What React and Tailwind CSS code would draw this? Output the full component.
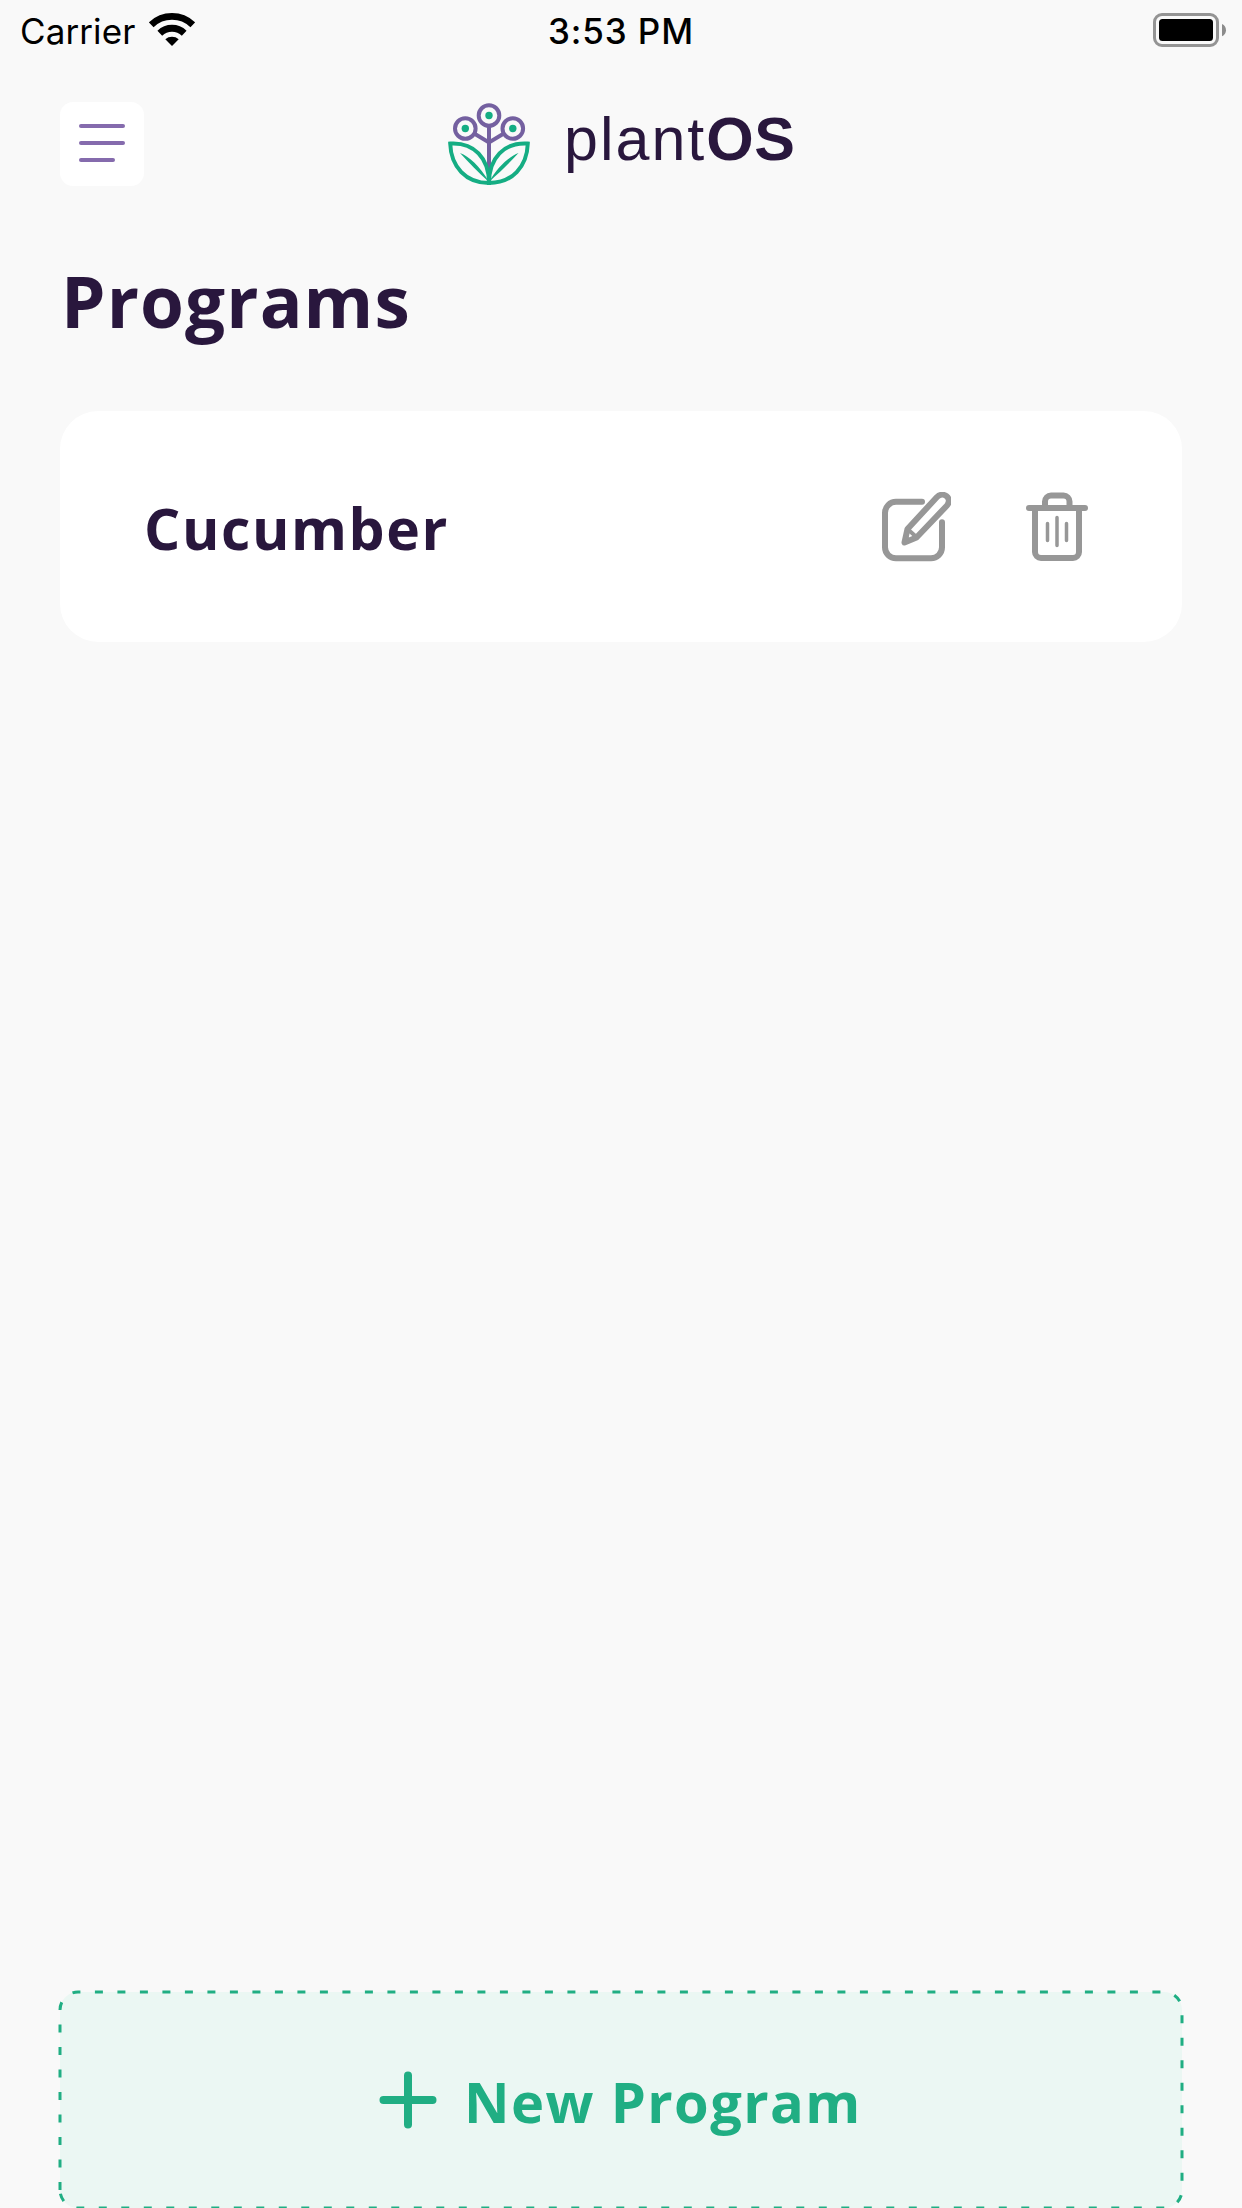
function Wifi() {
  return (
    <svg className="ml-[14px] h-[34px] w-[46px]" viewBox="149 13 46 34" fill="none">
      <path d="M151.200 24.800A30 30 0 0 1 192.800 24.800" stroke="#000" strokeWidth="6.800" />
      <path d="M159.800 33.200A17.500 17.500 0 0 1 184.200 33.200" stroke="#000" strokeWidth="6.800" />
      <path d="M165.300 39.200a10.500 10.500 0 0 1 13.400 0L172 46Z" fill="#000" />
    </svg>
  );
}

function Battery() {
  return (
    <svg className="h-[34px] w-[74px]" viewBox="1153 13 74 34" fill="none">
      <rect x="1154.500" y="14.500" width="63" height="31" rx="7.500" stroke="#949494" strokeWidth="3" />
      <rect x="1159" y="19" width="54" height="22" rx="3.500" fill="#000" />
      <path d="M1222 24c5.300 2.300 5.300 10 0 12.300Z" fill="#8c8c8c" />
    </svg>
  );
}

function StatusBar() {
  return (
    <div className="grid h-[60px] grid-cols-3 items-center pl-5 pr-[20px] font-['Inter'] text-[35px] leading-[58px] text-black">
      <div className="flex items-center">
        <span className="pt-[2px] tracking-[0.100px]">Carrier</span>
        <Wifi />
      </div>
      <div className="pt-[2px] text-center font-medium tracking-[0.900px]">3:53 PM</div>
      <div className="-mr-[5px] flex justify-end">
        <Battery />
      </div>
    </div>
  );
}

function PlantLogo() {
  return (
    <svg className="h-[84px] w-[84px]" viewBox="447 102 84 84" fill="none">
      <g stroke="#7460a0" strokeWidth="4">
        <path d="M489 127v42M475 134l14 8.500 14-8.500" />
        <circle cx="489" cy="115.500" r="10.300" />
        <circle cx="465.300" cy="128.500" r="10.300" />
        <circle cx="512.800" cy="128.500" r="10.300" />
      </g>
      <g fill="#15ad83">
        <circle cx="489" cy="115.500" r="3.700" />
        <circle cx="465.300" cy="128.500" r="3.700" />
        <circle cx="512.800" cy="128.500" r="3.700" />
        <path d="M460 153c9 3.500 20 13 29 29-11-10-20-19-29-29ZM518.500 153c-9 3.500-20.500 13-29.500 29 11-10 20.500-19 29.500-29Z" />
      </g>
      <g stroke="#15ad83" strokeWidth="4" strokeLinejoin="miter">
        <path d="M450.200 143.500C474 142 489 158 489 183C466 183 451 167 450.200 143.500Z" />
        <path d="M527.800 143.500C504 142 489 158 489 183C512 183 527 167 527.800 143.500Z" />
      </g>
    </svg>
  );
}

function Header() {
  return (
    <header className="mt-[42px] flex h-[84px] px-[60px]">
      <button className="flex h-[84px] w-[84px] flex-col gap-[13px] rounded-[13px] bg-white pl-[19px] pt-[21.500px]" aria-label="Menu">
        <span className="h-1 w-[46px] rounded-full bg-[#856bad]" />
        <span className="h-1 w-[46px] rounded-full bg-[#856bad]" />
        <span className="h-1 w-[36px] rounded-full bg-[#856bad]" />
      </button>
      <div className="ml-[303px] flex">
        <PlantLogo />
        <div className="ml-[33px] whitespace-nowrap font-['Liberation_Sans'] text-[61px] leading-[74px] text-[#29173d]">
          <span className="tracking-[2px]">plant</span>
          <span className="font-bold tracking-[0.500px]">OS</span>
        </div>
      </div>
    </header>
  );
}

function EditIcon() {
  return (
    <svg className="h-[70px] w-[70px]" viewBox="881 491.500 70 70" fill="none" stroke="#979797" strokeWidth="6" strokeLinecap="round" strokeLinejoin="round">
      <path d="M922 501.300h-26a11 11 0 0 0-11 11v34.500a11 11 0 0 0 11 11h35a11 11 0 0 0 11-11v-25" />
      <path d="m907.500 528.500 29.500-32c6-6 16 1 10 8.500l-30.500 32-12 5Z" />
      <path d="m908 529 9 8" strokeWidth="4" />
    </svg>
  );
}

function TrashIcon() {
  return (
    <svg className="h-[70px] w-[64px]" viewBox="1026 491.500 64 70" fill="none" stroke="#979797" strokeWidth="6" strokeLinecap="round" strokeLinejoin="round">
      <path d="M1029 507.500h56M1035 508v43.500a6 6 0 0 0 6 6h32a6 6 0 0 0 6-6V508M1045 506v-5a6 6 0 0 1 6-6h12.500a6 6 0 0 1 6 6v5" />
      <path d="M1047.500 523v17M1057 517v28M1066.500 523v17" strokeWidth="3.500" />
    </svg>
  );
}

function ProgramCard({ name }) {
  return (
    <article className="flex h-[231px] items-center rounded-[38px] bg-white pl-[84px] pr-[92px]">
      <h2 className="flex-1 whitespace-nowrap pt-[2px] font-['Open_Sans'] text-[57px] font-bold leading-[76px] tracking-[1.600px] text-[#29173d]">{name}</h2>
      <button aria-label="Edit"><EditIcon /></button>
      <button className="ml-[75px]" aria-label="Delete"><TrashIcon /></button>
    </article>
  );
}

function NewProgramButton() {
  return (
    <button className="relative mx-[60px] flex h-[216px] shrink-0 items-center rounded-[18px] bg-[#ebf7f3] pl-[319px] text-[#20ae83]">
      <svg className="absolute inset-0 h-full w-full overflow-visible" viewBox="0 0 1122 216" fill="none">
        <path d="M0 198V18A18 18 0 0 1 18 0H1104A18 18 0 0 1 1122 18V198A18 18 0 0 1 1104 216H18A18 18 0 0 1 0 198" stroke="currentColor" strokeWidth="3" strokeDasharray="8 14.500" />
      </svg>
      <svg className="h-[58px] w-[58px]" viewBox="0 0 58 58" fill="none" stroke="currentColor" strokeWidth="8" strokeLinecap="round">
        <path d="M29 4.500v49M4.500 29h49" />
      </svg>
      <span className="ml-[27px] whitespace-nowrap pt-[2px] font-['Open_Sans'] text-[56px] font-bold leading-[76px] tracking-[1.400px]">New Program</span>
    </button>
  );
}

export default function App() {
  return (
    <div className="flex h-[2208px] w-[1242px] flex-col overflow-hidden bg-[#f9f9f9] font-['Open_Sans',sans-serif]">
      <StatusBar />
      <Header />
      <main className="flex-1 px-[60px]">
        <h1 className="mb-[62px] mt-[67px] h-[96px] whitespace-nowrap pl-px text-[71px] font-bold leading-[96px] tracking-[1.100px] text-[#29173d]">Programs</h1>
        <ProgramCard name="Cucumber" />
      </main>
      <NewProgramButton />
    </div>
  );
}
